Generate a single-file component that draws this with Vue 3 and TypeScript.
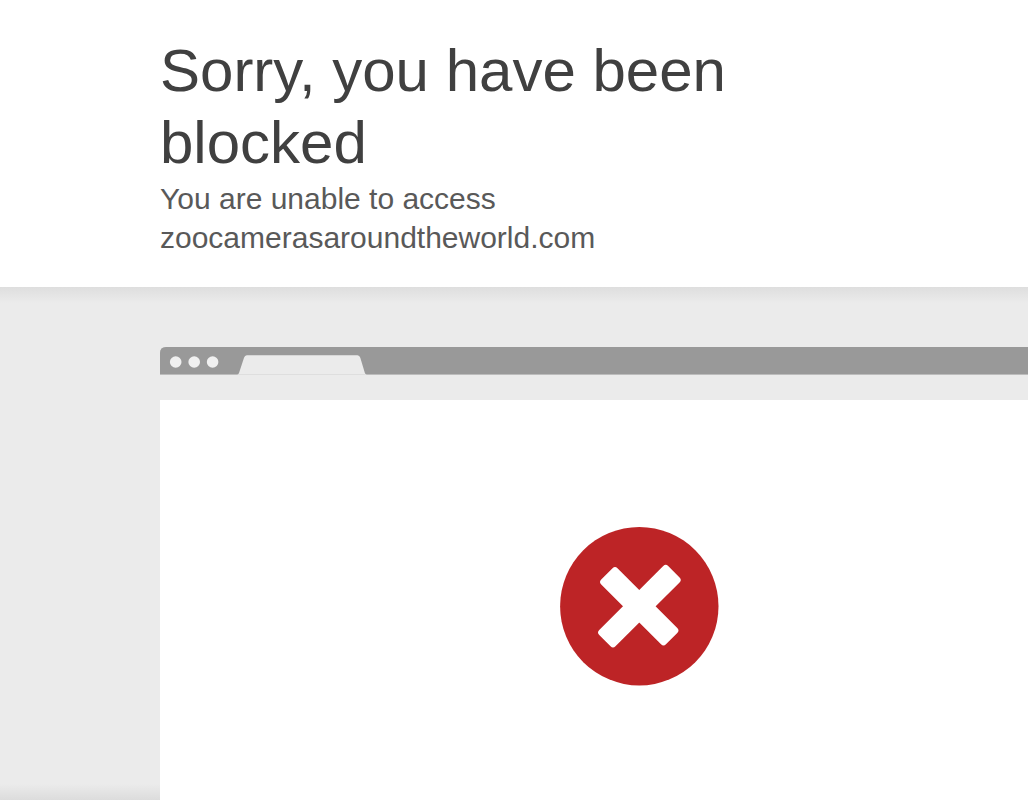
<script setup lang="ts">
const site = 'zoocamerasaroundtheworld.com'
const dots: number[] = [15.7, 34.2, 52.6]
</script>

<template>
  <main class="page">
    <header class="intro">
      <h1 class="title">Sorry, you have been blocked</h1>
      <h2 class="subtitle">You are unable to access {{ site }}</h2>
    </header>

    <section class="highlight">
      <div class="browser">
        <svg class="chrome" viewBox="0 0 960 28" aria-hidden="true">
          <path d="M0 28V6Q0 0 6 0H954Q960 0 960 6V28Z" fill="#c9c9c9" />
          <path d="M0 27.3V6Q0 0 6 0H954Q960 0 960 6V27.3Z" fill="#999" />
          <circle v-for="x in dots" :key="x" :cx="x" cy="15" r="5.8" fill="#f0f0f0" />
          <path d="M77.300 28Q78.600 27.400 79.100 25.800L84 10.800Q84.800 8.300 86.800 8.300H197.500Q199.500 8.300 200.300 10.800L204.800 25.800Q205.300 27.400 206.600 28Z" fill="#ebebeb" />
          <path d="M78 27.500H206" stroke="#dedede" />
        </svg>
        <div class="viewport">
          <svg class="error-icon" viewBox="0 0 160 160" role="img" aria-label="Blocked">
            <circle cx="79.300" cy="80.200" r="79.200" fill="#bd2426" />
            <g fill="#fff" stroke="#fff" stroke-width="7" stroke-linejoin="round">
              <path d="M43.700 56L55 44.700L114.800 104.500L103.500 115.800Z" />
              <path d="M41.700 106.500L53 117.800L117.100 53.900L105.700 42.400Z" />
            </g>
          </svg>
        </div>
      </div>
    </section>
  </main>
</template>

<style>
body {
  margin: 0;
  background: #fff;
}
</style>

<style scoped>
.page {
  font-family: "Liberation Sans", Arial, sans-serif;
  color: #404040;
}

.intro {
  padding: 35px 160px 30px;
}

.title {
  margin: 0;
  font-size: 60px;
  font-weight: 400;
  line-height: 72px;
}

.subtitle {
  margin: 0;
  color: #595959;
  font-size: 30px;
  font-weight: 400;
  line-height: 39px;
}

.highlight {
  display: flex;
  overflow: hidden;
  padding: 60px 0 0 160px;
  background:
    linear-gradient(to bottom, #dedede, #ebebeb) top / 100% 16px no-repeat,
    linear-gradient(to top, #dcdcdc, #ebebeb) bottom / 100% 16px no-repeat,
    #ebebeb;
}

.browser {
  flex: 0 0 960px;
}

.chrome {
  display: block;
  width: 100%;
}

.viewport {
  display: flex;
  justify-content: center;
  margin-top: 25px;
  padding: 126px 0 114px;
  background: #fff;
}

.error-icon {
  width: 160px;
}
</style>
